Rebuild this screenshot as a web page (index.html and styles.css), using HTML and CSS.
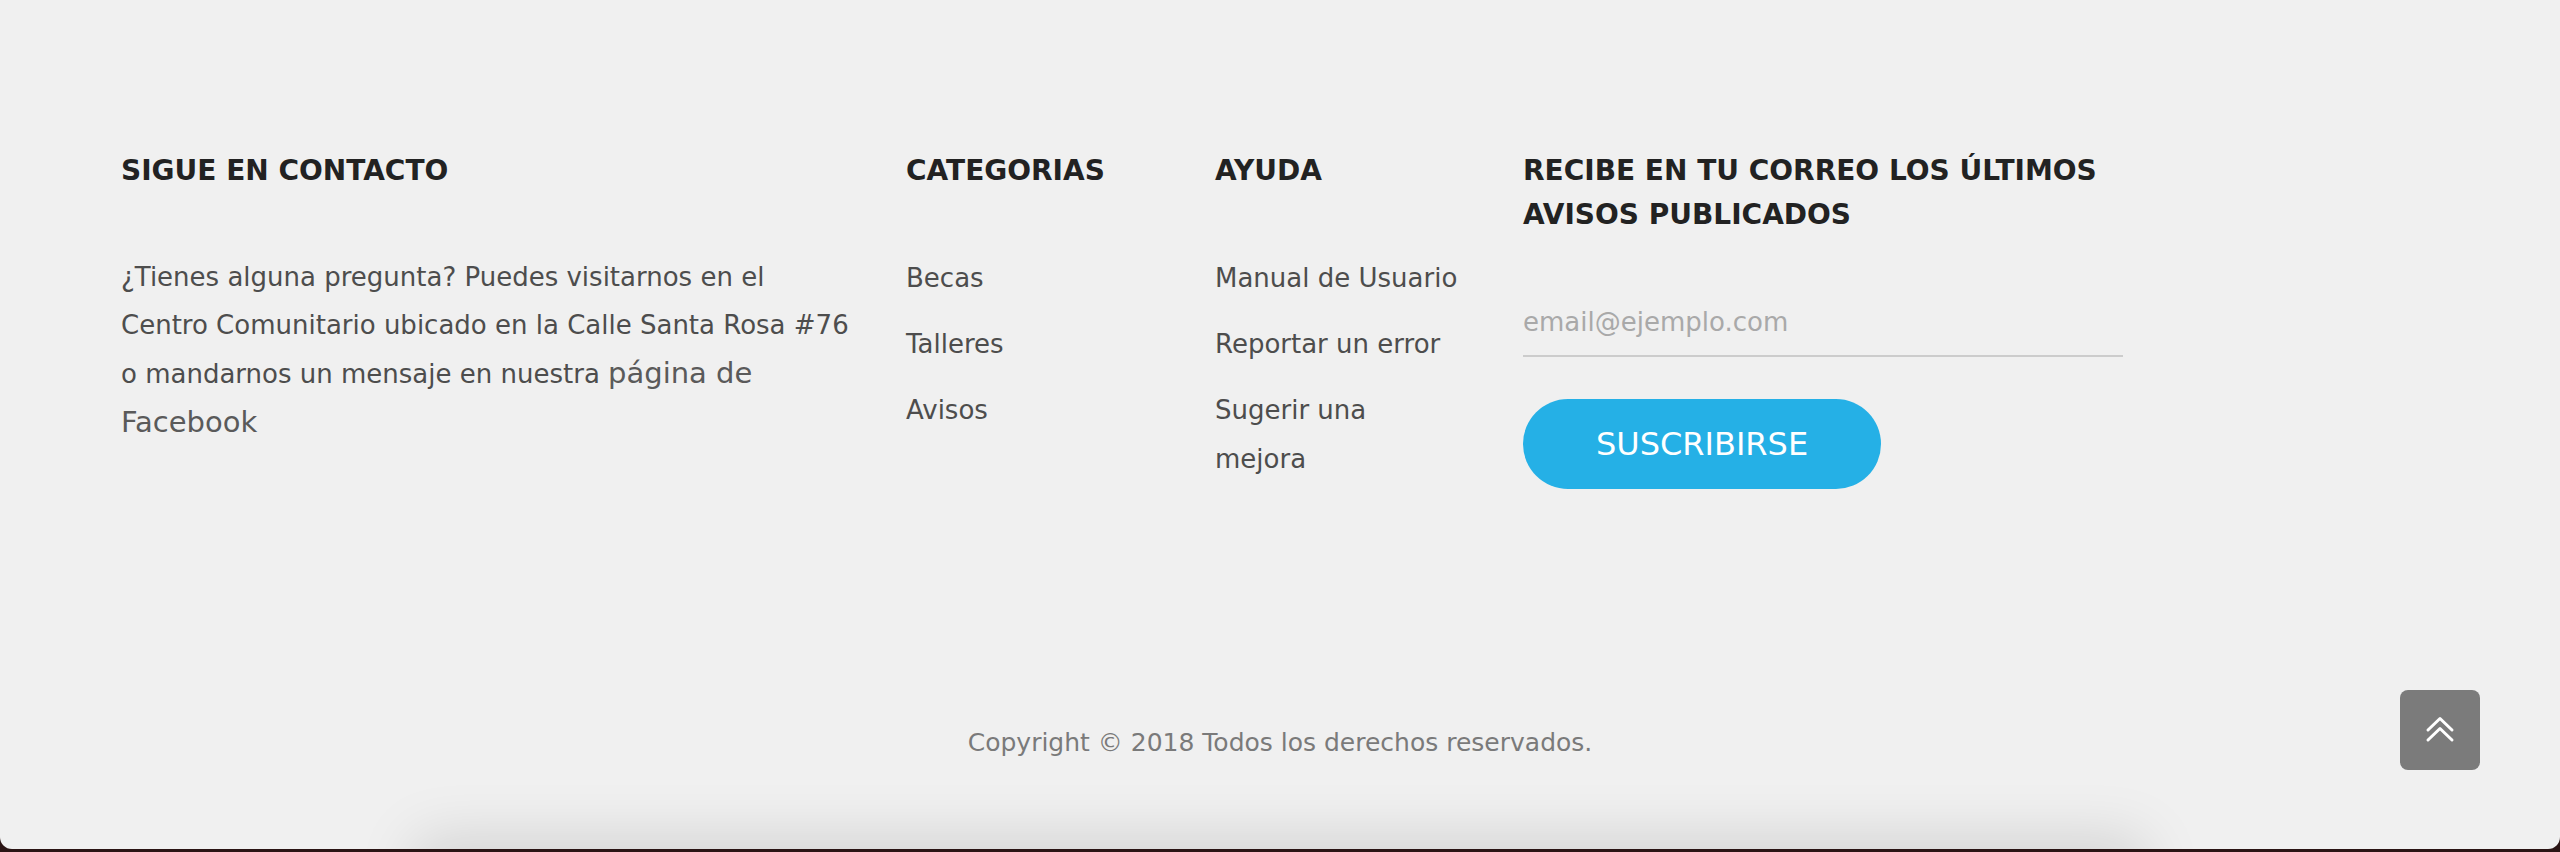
FILE: index.html
```html
<!DOCTYPE html>
<html lang="es">
<head>
<meta charset="utf-8">
<title>Footer</title>
<link rel="stylesheet" href="styles.css">
</head>
<body>
<div class="page">
  <footer class="footer">
    <div class="container">
      <div class="cols">
        <section class="col col-contact">
          <h4 class="col-title">SIGUE EN CONTACTO</h4>
          <p class="contact-text">¿Tienes alguna pregunta? Puedes visitarnos en el Centro Comunitario ubicado en la Calle Santa Rosa #76 o mandarnos un mensaje en nuestra <a class="fb-link" href="#">página de Facebook</a></p>
        </section>
        <section class="col col-cat">
          <h4 class="col-title">CATEGORIAS</h4>
          <ul class="links">
            <li><a href="#">Becas</a></li>
            <li><a href="#">Talleres</a></li>
            <li><a href="#">Avisos</a></li>
          </ul>
        </section>
        <section class="col col-help">
          <h4 class="col-title">AYUDA</h4>
          <ul class="links links-help">
            <li><a href="#">Manual de Usuario</a></li>
            <li><a href="#">Reportar un error</a></li>
            <li><a href="#">Sugerir una mejora</a></li>
          </ul>
        </section>
        <section class="col col-news">
          <h4 class="col-title">RECIBE EN TU CORREO LOS ÚLTIMOS AVISOS PUBLICADOS</h4>
          <form class="news-form">
            <input class="news-input" type="email" placeholder="email@ejemplo.com">
            <button class="news-btn" type="button">SUSCRIBIRSE</button>
          </form>
        </section>
      </div>
      <p class="copyright">Copyright © 2018 Todos los derechos reservados.</p>
    </div>
  </footer>
  <a class="to-top" href="#" aria-label="Subir">
    <svg width="80" height="80" viewBox="0 0 80 80" fill="none" stroke="#ffffff" stroke-width="3" stroke-linecap="round" stroke-linejoin="round">
      <polyline points="28,40 40,28.5 52,40"/>
      <polyline points="28,50 40,38.5 52,50"/>
    </svg>
  </a>
</div>
</body>
</html>
```
FILE: styles.css
```css
html, body {
  margin: 0;
  padding: 0;
}
body {
  background: #2a1414;
  height: 852px;
  overflow: hidden;
  font-family: "DejaVu Sans", "Liberation Sans", sans-serif;
}
.page {
  position: relative;
  height: 849px;
  background: #f0f0f0;
  border-radius: 0 0 12px 12px;
  overflow: hidden;
}
.page::after {
  content: "";
  position: absolute;
  left: 420px;
  right: 420px;
  top: 100%;
  height: 100px;
  box-shadow: 0 -6px 60px 4px rgba(0, 0, 0, 0.13);
}
.container {
  padding: 149px 0 0 121px;
  width: 2040px;
  box-sizing: border-box;
}
.cols {
  display: grid;
  grid-template-columns: 785px 309px 308px 600px;
  align-items: start;
}
.col-title {
  margin: 0;
  font-size: 28px;
  line-height: 44px;
  font-weight: 700;
  color: #222222;
}
.contact-text {
  margin: 60px 0 0;
  width: 736px;
  font-size: 26px;
  line-height: 48px;
  color: #4d4d4d;
}
.fb-link {
  font-size: 29px;
  color: #5a5a5a;
  text-decoration: none;
}
.links {
  list-style: none;
  margin: 61px 0 0;
  padding: 0;
}
.links li {
  font-size: 26px;
  line-height: 49px;
  margin-bottom: 17px;
}
.links a {
  color: #4d4d4d;
  text-decoration: none;
}
.links-help {
  width: 246px;
}
.news-form {
  display: flex;
  flex-direction: column;
  align-items: flex-start;
}
.news-input {
  margin-top: 52px;
  width: 600px;
  height: 68px;
  box-sizing: border-box;
  padding: 0;
  border: 0;
  border-bottom: 2px solid #cccccc;
  background: transparent;
  font-family: inherit;
  font-size: 26px;
  color: #444444;
  outline: none;
}
.news-input::placeholder {
  color: #a9a9a9;
}
.news-btn {
  margin-top: 42px;
  width: 358px;
  height: 90px;
  border: 0;
  border-radius: 45px;
  background: #25b0e6;
  color: #ffffff;
  font-family: inherit;
  font-size: 32px;
  cursor: pointer;
}
.copyright {
  margin: 222px 0 0;
  text-align: center;
  font-size: 25px;
  line-height: 40px;
  color: #7a7a7a;
  position: relative;
  left: -121px;
  width: 2560px;
}
.to-top {
  position: absolute;
  left: 2400px;
  top: 690px;
  width: 80px;
  height: 80px;
  border-radius: 8px;
  background: #7b7b7b;
  display: flex;
}
```
